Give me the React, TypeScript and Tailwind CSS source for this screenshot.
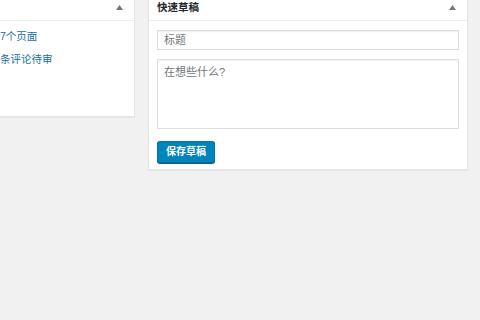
const font = "font-['Liberation_Sans','Noto_Sans_CJK_SC',sans-serif]";

function Caret() {
  return (
    <svg width="7" height="5" viewBox="0 0 7 5" className="shrink-0">
      <path d="M0 5 L3.5 0 L7 5 Z" fill="#72777c" />
    </svg>
  );
}

function Panel({ title, className, children }: { title?: string; className: string; children: React.ReactNode }) {
  return (
    <div className={`bg-white border border-t-0 border-[#e5e5e5] shadow-[0_1px_1px_rgba(0,0,0,0.04)] ${className}`}>
      <div className="h-[21px] flex items-center justify-between border-b border-[#eeeeee] pl-[8px] pr-[11px]">
        <span className="text-[10.5px] font-bold text-[#23282d] -mt-[5px]">{title}</span>
        <span className="-mt-[5px]"><Caret /></span>
      </div>
      {children}
    </div>
  );
}

export default function App() {
  return (
    <div className={`h-[320px] w-[480px] bg-[#f1f1f1] flex items-start gap-[13px] ${font}`}>
      <Panel className="w-[135px] h-[117px] border-l-0" title="">
        <div className="pt-[9px] flex flex-col gap-[10px] text-[10.5px] text-[#21709e] leading-[13px]">
          <span>7个页面</span>
          <span>条评论待审</span>
        </div>
      </Panel>
      <Panel className="w-[320px] h-[170px]" title="快速草稿">
        <div className="px-[8px] pt-[9px] flex flex-col">
          <div className="h-[20px] border border-[#dddddd] shadow-[inset_0_1px_2px_rgba(0,0,0,0.07)] flex items-center px-[6px] text-[11px] text-[#72777c]">
            标题
          </div>
          <div className="mt-[9px] h-[70px] border border-[#dddddd] shadow-[inset_0_1px_2px_rgba(0,0,0,0.07)] px-[6px] pt-[4px] text-[11px] text-[#72777c]">
            在想些什么?
          </div>
          <div className="mt-[9px]">
            <button className="h-[22px] px-[8px] rounded-[3px] bg-[#0085ba] border border-[#0073aa] border-b-[#006799] shadow-[0_1px_0_#006799] text-white text-[10px] font-bold">
              保存草稿
            </button>
          </div>
        </div>
      </Panel>
    </div>
  );
}
